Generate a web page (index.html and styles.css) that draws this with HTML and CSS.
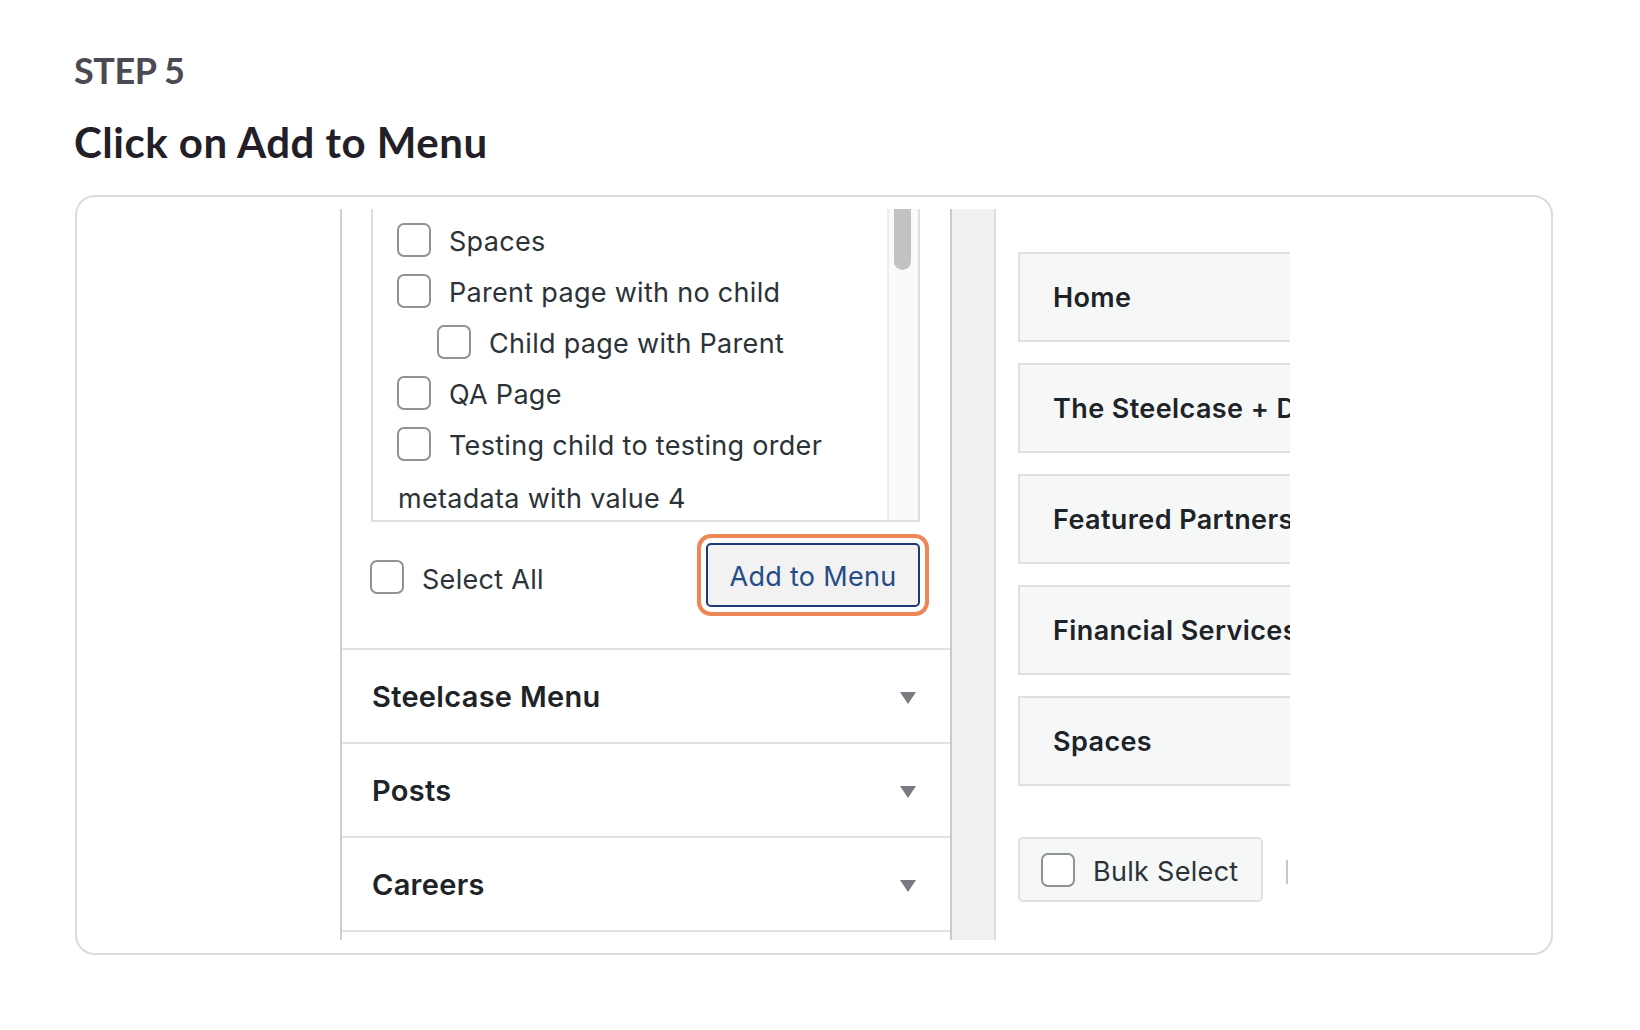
FILE: index.html
```html
<!DOCTYPE html>
<html lang="en">
<head>
<meta charset="utf-8">
<title>Step 5 - Click on Add to Menu</title>
<link rel="stylesheet" href="styles.css">
</head>
<body>
<main class="page">
  <p class="step">STEP 5</p>
  <h1 class="title">Click on Add to Menu</h1>
  <section class="card">
    <div class="shot">
      <div class="left-panel">
        <div class="list-box">
          <ul class="list">
            <li class="row"><span class="cb"></span><span class="lbl">Spaces</span></li>
            <li class="row"><span class="cb"></span><span class="lbl">Parent page with no child</span></li>
            <li class="row child"><span class="cb"></span><span class="lbl">Child page with Parent</span></li>
            <li class="row"><span class="cb"></span><span class="lbl">QA Page</span></li>
            <li class="row"><span class="cb"></span><span class="lbl">Testing child to testing order</span></li>
            <li class="wrap">metadata with value 4</li>
          </ul>
          <div class="track"><div class="thumb"></div></div>
        </div>
        <div class="actions">
          <label class="select-all"><span class="cb"></span><span class="lbl">Select All</span></label>
          <button class="add-btn" type="button">Add to Menu</button>
        </div>
        <div class="acc"><span>Steelcase Menu</span><span class="tri"></span></div>
        <div class="acc"><span>Posts</span><span class="tri"></span></div>
        <div class="acc"><span>Careers</span><span class="tri"></span></div>
        <div class="acc-end"></div>
      </div>
      <div class="strip"></div>
      <div class="right-panel">
        <div class="item">Home</div>
        <div class="item">The Steelcase + Design Partners</div>
        <div class="item">Featured Partners</div>
        <div class="item">Financial Services</div>
        <div class="item">Spaces</div>
        <div class="bulk-row">
          <div class="bulk"><span class="cb"></span><span class="lbl">Bulk Select</span></div>
          <span class="link-stub"></span>
        </div>
      </div>
    </div>
  </section>
</main>
</body>
</html>
```

FILE: styles.css
```css
* { box-sizing: border-box; }
html, body { margin: 0; padding: 0; background: #ffffff; }
body { font-family: "Inter", "Noto Sans", sans-serif; }

.page { padding: 48px 0 0 74px; }

.step {
  margin: 0;
  font-family: "Lato", sans-serif;
  font-weight: 700;
  font-size: 36px;
  line-height: 44px;
  letter-spacing: -0.4px;
  color: #4b4a52;
}

.title {
  margin: 26px 0 0 0;
  font-family: "Lato", sans-serif;
  font-weight: 700;
  font-size: 42px;
  line-height: 48px;
  letter-spacing: 0.5px;
  color: #221f29;
}

.card {
  margin: 29px 0 0 1px;
  width: 1478px;
  height: 760px;
  border: 2px solid #dcdcdc;
  border-radius: 20px;
  background: #fff;
}

.shot {
  margin: 12px 0 0 263px;
  width: 950px;
  height: 731px;
  overflow: hidden;
  display: flex;
}

/* left panel */
.left-panel {
  width: 612px;
  flex: none;
  border-left: 2px solid #cfcfd1;
  border-right: 2px solid #c9cacc;
  background: #fff;
}

.list-box {
  margin-left: 29px;
  width: 549px;
  height: 313px;
  border: 2px solid #dedfe0;
  border-top: none;
  display: flex;
}

.list {
  list-style: none;
  margin: 0;
  padding: 5px 0 0 24px;
  flex: 1;
  font-size: 27px;
  letter-spacing: 0.3px;
  color: #2c3338;
}

.row {
  height: 51px;
  display: flex;
  align-items: center;
  gap: 18px;
}
.row.child { padding-left: 40px; }

.lbl { padding-top: 4px; }

.wrap {
  height: 51px;
  line-height: 51px;
  padding-top: 4px;
  margin-left: 1px;
}

.cb {
  width: 34px;
  height: 34px;
  flex: none;
  border: 2px solid #8f9296;
  border-radius: 7px;
  background: #fff;
}

.track {
  width: 31px;
  flex: none;
  border-left: 2px solid #ececec;
  background: #fafafa;
  padding-left: 5px;
}
.thumb {
  width: 17px;
  height: 61px;
  background: #c2c2c2;
  border-radius: 0 0 9px 9px;
}

.actions {
  margin-top: 21px;
  height: 64px;
  margin-bottom: 41px;
  padding: 0 30px 0 28px;
  display: flex;
  align-items: center;
  justify-content: space-between;
}

.select-all {
  display: flex;
  align-items: center;
  gap: 18px;
  font-size: 27px;
  letter-spacing: 0.3px;
  color: #2c3338;
  margin-top: 4px;
}

.add-btn {
  width: 214px;
  height: 64px;
  padding: 2px 0 0 0;
  background: #f2f2f3;
  border: 2px solid #1f3a78;
  border-radius: 5px;
  font-family: "Inter", "Noto Sans", sans-serif;
  font-size: 27px;
  letter-spacing: 0.3px;
  color: #254c85;
  outline: 4px solid #ee8656;
  outline-offset: 5px;
}

.acc {
  height: 94px;
  border-top: 2px solid #e1e1e3;
  padding: 0 34px 0 30px;
  display: flex;
  align-items: center;
  justify-content: space-between;
  font-size: 29px;
  letter-spacing: 0.3px;
  font-weight: 600;
  color: #1d2327;
}
.acc-end { border-top: 2px solid #e1e1e3; height: 12px; }

.tri {
  width: 0;
  height: 0;
  border-left: 8px solid transparent;
  border-right: 8px solid transparent;
  border-top: 12px solid #787c82;
  margin-top: 4px;
}

/* strip */
.strip {
  width: 44px;
  flex: none;
  background: #f0f0f1;
  border-right: 2px solid #dcdcde;
}

/* right panel */
.right-panel {
  width: 294px;
  flex: none;
  overflow: hidden;
  padding: 43px 0 0 22px;
  background: #fff;
}

.item {
  width: 420px;
  height: 90px;
  margin-bottom: 21px;
  border: 2px solid #e0e0e1;
  background: #f6f7f7;
  padding-left: 33px;
  display: flex;
  align-items: center;
  white-space: nowrap;
  font-size: 27px;
  letter-spacing: 0.4px;
  font-weight: 600;
  color: #1d2327;
}

.bulk-row {
  margin-top: 51px;
  display: flex;
  align-items: center;
  gap: 23px;
}

.bulk {
  width: 245px;
  height: 65px;
  flex: none;
  border: 2px solid #dfe0e1;
  border-radius: 5px;
  background: #f6f7f7;
  padding-left: 21px;
  display: flex;
  align-items: center;
  gap: 18px;
  font-size: 27px;
  letter-spacing: 0.3px;
  color: #2c3338;
}

.link-stub {
  width: 2px;
  height: 24px;
  flex: none;
  background: #c6c7c9;
  margin-top: 4px;
}
```
